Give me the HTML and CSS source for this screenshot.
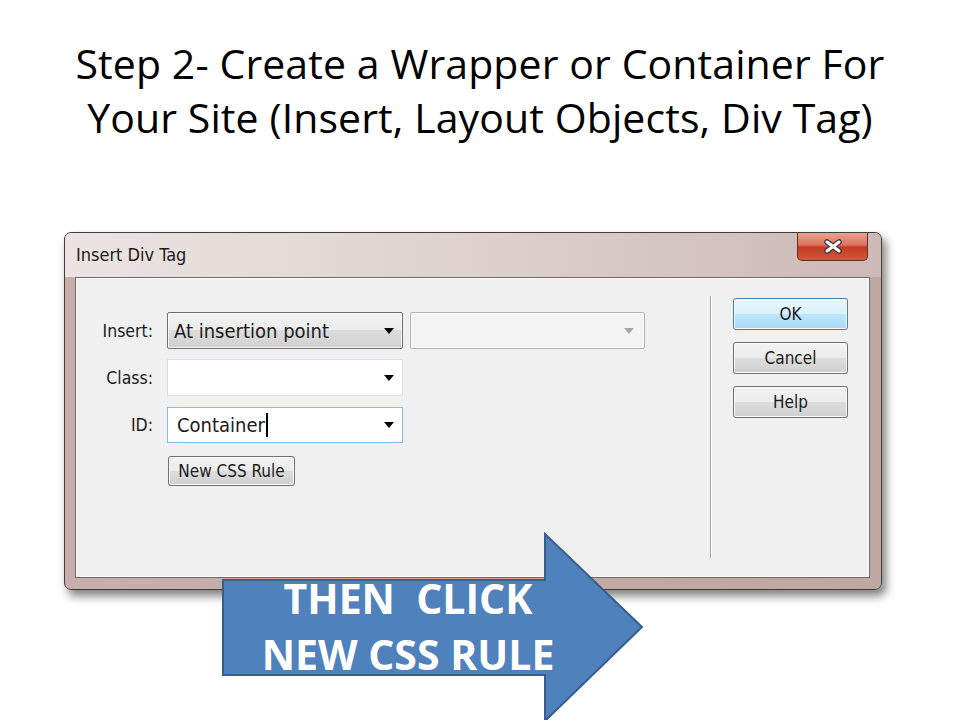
FILE: index.html
```
<!DOCTYPE html>
<html lang="en">
<head>
    <meta charset="UTF-8">
    <meta name="viewport" content="width=device-width, initial-scale=1.0">
    <title>Step 2 - Insert Div Tag</title>
    <link rel="stylesheet" href="styles.css">
</head>
<body>
    <div class="slide">
        <h1 class="slide-title">Step 2- Create a Wrapper or Container For<br>Your Site (Insert, Layout Objects, Div Tag)</h1>

        <!-- Insert Div Tag dialog -->
        <div class="dialog">
            <div class="titlebar">
                <span class="titlebar-text">Insert Div Tag</span>
                <button class="close-btn">
                    <svg width="20" height="15" viewBox="0 0 20 15">
                        <path d="M4 3 L16 12 M16 3 L4 12" stroke="#3b3b3b" stroke-width="5.5" stroke-linecap="round"/>
                        <path d="M4 3 L16 12 M16 3 L4 12" stroke="#ffffff" stroke-width="3" stroke-linecap="round"/>
                    </svg>
                </button>
            </div>

            <div class="client">
                <div class="form-area">
                    <div class="form-row">
                        <label class="field-label">Insert:</label>
                        <div class="select">
                            <span>At insertion point</span>
                            <svg class="drop" width="10" height="6" viewBox="0 0 10 6"><path d="M0 0 H10 L5 6 Z" fill="#000"/></svg>
                        </div>
                        <div class="select disabled">
                            <span></span>
                            <svg class="drop" width="10" height="6" viewBox="0 0 10 6"><path d="M0 0 H10 L5 6 Z" fill="#a8a8a8"/></svg>
                        </div>
                    </div>
                    <div class="form-row row-class">
                        <label class="field-label">Class:</label>
                        <div class="combo">
                            <span></span>
                            <svg class="drop" width="10" height="6" viewBox="0 0 10 6"><path d="M0 0 H10 L5 6 Z" fill="#000"/></svg>
                        </div>
                    </div>
                    <div class="form-row row-id">
                        <label class="field-label">ID:</label>
                        <div class="combo focused">
                            <span>Container<i class="caret"></i></span>
                            <svg class="drop" width="10" height="6" viewBox="0 0 10 6"><path d="M0 0 H10 L5 6 Z" fill="#000"/></svg>
                        </div>
                    </div>
                    <button class="btn css-rule-btn">New CSS Rule</button>
                </div>

                <div class="separator"></div>

                <div class="button-col">
                    <button class="btn btn-default">OK</button>
                    <button class="btn">Cancel</button>
                    <button class="btn">Help</button>
                </div>
            </div>
        </div>

        <!-- Callout arrow -->
        <div class="callout">
            <svg width="424" height="192" viewBox="0 0 424 192">
                <path d="M1 48 H323 V2 L420 95 L323 189 V143 H1 Z" fill="#4f81bd" stroke="#385d8a" stroke-width="2"/>
            </svg>
            <div class="callout-text">THEN&nbsp; CLICK<br>NEW CSS RULE</div>
        </div>
    </div>
</body>
</html>
```

FILE: styles.css
```
/* Slide */
body {
    margin: 0;
    background-color: #ffffff;
}

.slide {
    position: relative;
    width: 960px;
    height: 720px;
    overflow: hidden;
    background-color: #ffffff;
}

.slide-title {
    margin: 36px 0 0 0;
    font-family: "Open Sans", sans-serif;
    font-weight: normal;
    font-size: 41px;
    line-height: 54px;
    letter-spacing: 0.1px;
    text-align: center;
    color: #000000;
}

/* Dialog window */
.dialog {
    box-sizing: border-box;
    width: 818px;
    height: 358px;
    margin: 88px 0 0 64px;
    padding: 0 11px 11px 10px;
    border: 1px solid #463c3a;
    border-radius: 7px;
    background: linear-gradient(to right, #c7b0ab, #bfa7a2);
    box-shadow: 4px 6px 10px rgba(0, 0, 0, 0.5);
    display: flex;
    flex-direction: column;
    overflow: hidden;
    font-family: "DejaVu Sans Condensed", "DejaVu Sans", sans-serif;
    color: #1b1b1b;
}

.titlebar {
    height: 44px;
    margin: 0 -11px 0 -10px;
    padding: 0 13px 0 11px;
    display: flex;
    justify-content: space-between;
    align-items: flex-start;
    background: linear-gradient(to right, #ebe4e2 0%, #dfd3d0 45%, #cdb9b5 100%);
    flex-shrink: 0;
}

.titlebar-text {
    padding-top: 12px;
    font-size: 18px;
    line-height: 20px;
}

.close-btn {
    width: 71px;
    height: 29px;
    margin-top: -1px;
    padding: 0;
    border: 1px solid #6e2a20;
    border-top: none;
    border-radius: 0 0 5px 5px;
    background: linear-gradient(#eba797 0%, #db735f 45%, #c53a22 55%, #d0583d 100%);
    display: flex;
    justify-content: center;
    align-items: center;
}

.client {
    flex: 1;
    display: flex;
    background-color: #f0f0f0;
    border: 1px solid #6f6767;
    box-shadow: inset 0 0 0 1px #ffffff;
}

/* Form fields */
.form-area {
    width: 634px;
    padding-top: 34px;
    display: flex;
    flex-direction: column;
}

.form-row {
    display: flex;
    align-items: center;
    height: 37px;
}

.row-class {
    margin-top: 10px;
}

.row-id {
    margin-top: 11px;
    height: 36px;
}

.field-label {
    width: 77px;
    margin-right: 14px;
    text-align: right;
    font-size: 17.5px;
}

.select,
.combo {
    box-sizing: border-box;
    width: 236px;
    height: 100%;
    padding: 0 8px 0 6px;
    display: flex;
    align-items: center;
    justify-content: space-between;
    font-size: 20px;
}

.select {
    border: 1px solid #707070;
    border-radius: 2px;
    background: linear-gradient(#f3f3f3 0%, #ebebeb 50%, #dddddd 50%, #d0d0d0 100%);
    box-shadow: inset 0 0 0 1px #f8f8f8;
}

.select.disabled {
    width: 235px;
    margin-left: 7px;
    padding-right: 10px;
    border-color: #b4b4b4;
    background: #f4f4f4;
    box-shadow: inset 0 0 0 1px #fbfbfb;
}

.combo {
    background-color: #ffffff;
    border: 1px solid #d9dde4;
    padding-left: 9px;
}

.combo.focused {
    border-color: #8bbce8;
}

.caret {
    display: inline-block;
    width: 2px;
    height: 24px;
    margin-left: 1px;
    vertical-align: -5px;
    background-color: #000000;
}

/* Buttons */
.btn {
    box-sizing: border-box;
    height: 32px;
    padding: 0;
    border: 1px solid #707070;
    border-radius: 3px;
    background: linear-gradient(#f2f2f2 0%, #ebebeb 50%, #dddddd 50%, #cfcfcf 100%);
    box-shadow: inset 0 0 0 1px #fbfbfb;
    font-family: "DejaVu Sans Condensed", "DejaVu Sans", sans-serif;
    font-size: 17px;
    color: #1b1b1b;
}

.btn-default {
    border-color: #3c7fb1;
    background: linear-gradient(#eaf6fd 0%, #d9f0fc 50%, #bee6fd 50%, #a7d9f5 100%);
}

.css-rule-btn {
    align-self: flex-start;
    width: 127px;
    height: 30px;
    margin: 13px 0 0 92px;
}

.separator {
    width: 1px;
    margin: 18px 0 19px 0;
    background-color: #a0a0a0;
    border-right: 1px solid #ffffff;
}

.button-col {
    width: 115px;
    margin-left: 21px;
    padding-top: 20px;
    display: flex;
    flex-direction: column;
    gap: 12px;
}

/* Callout arrow over the dialog */
.callout {
    position: absolute;
    left: 222px;
    top: 532px;
    width: 424px;
    height: 192px;
}

.callout svg {
    display: block;
}

.callout-text {
    position: absolute;
    left: 0;
    top: 38px;
    width: 372px;
    font-family: "Open Sans", sans-serif;
    font-weight: bold;
    font-size: 41px;
    line-height: 56px;
    text-align: center;
    color: #ffffff;
}
```
